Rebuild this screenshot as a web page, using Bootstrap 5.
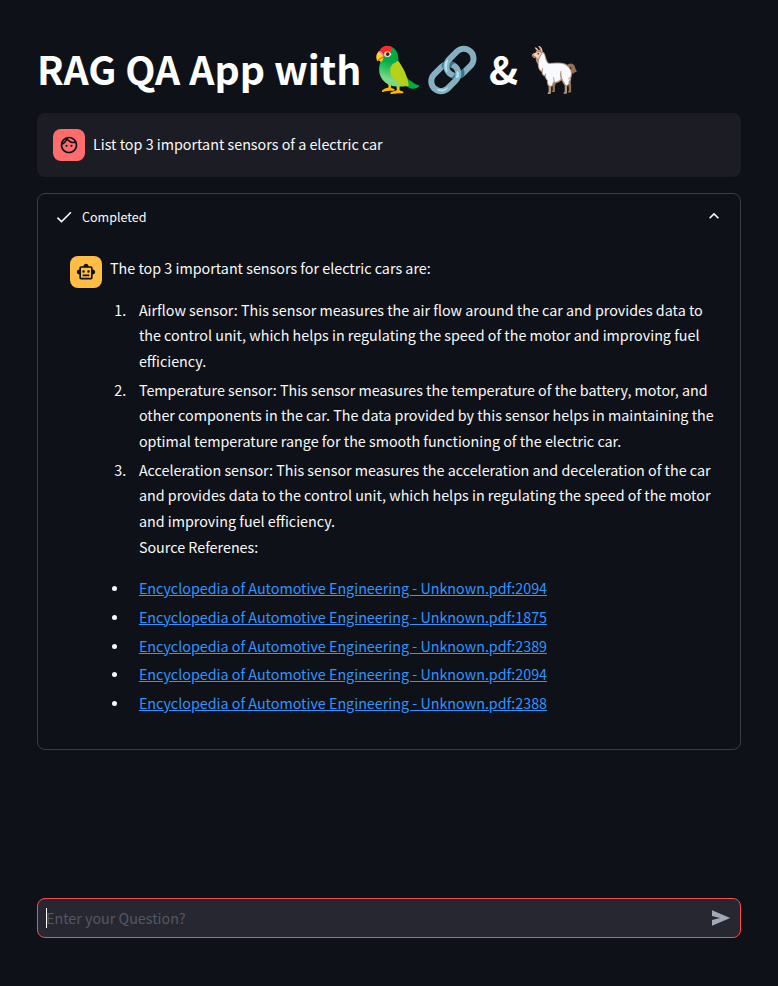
<!DOCTYPE html>
<html lang="en" data-bs-theme="dark">
<head>
<meta charset="utf-8">
<meta name="viewport" content="width=device-width, initial-scale=1">
<title>RAG QA App</title>
<link href="https://cdn.jsdelivr.net/npm/bootstrap@5.3.0/dist/css/bootstrap.min.css" rel="stylesheet">
<style>
  body { background: #0e1117; color: #fafafa; font-family: "Noto Sans CJK SC", "Noto Color Emoji", sans-serif; font-size: 14.327px; line-height: 25.6px; }
  .page { height: 986px; padding: 40px 37px 48px; }
  .app-title { font-size: 39.3px; line-height: 53px; height: 53px; font-weight: 700; margin: 1px 0 19px; white-space: nowrap; }
  .emoji { font-size: 44px; line-height: 1; }
  .avatar { width: 32px; height: 32px; border-radius: 8px; flex: none; color: #0e1117; }
  .avatar-user { background: #ff6c6c; }
  .avatar-bot { background: #ffbd45; }
  .question { background: #1b1c24; border-radius: 8px; height: 64px; }
  .question-text { padding-bottom: 2px; }
  .status-box { border: 1px solid #3b3d43; border-radius: 8px; height: 557px; }
  .status-head { font-size: 12.54px; height: 46px; padding: 0 16px; }
  .chevron { margin-bottom: 2px; }
  .answer { padding: 15.3px 0 0 32px; white-space: nowrap; }
  .answer .avatar { margin-top: .7px; }
  .answer ol, .answer ul { padding: 0; margin: 0 0 15.8px 19.4px; }
  .answer li { padding-left: 9.5px; }
  .answer ul { margin-left: 19px; }
  .answer ul li { padding-left: 9.9px; }
  .answer li + li { margin-top: 3.2px; }
  .answer ul li::marker { font-size: 13px; }
  .answer a { color: #3194ff; text-decoration: underline; }
  .ask { height: 40px; background: #262730; border: 1px solid #ff4b4b; border-radius: 8px; padding: 0 7px 0 8px; color: #555761; }
  .caret { width: 1px; height: 20px; background: #fff; margin-right: -1px; }
</style>
<script src="https://cdn.jsdelivr.net/npm/bootstrap@5.3.0/dist/js/bootstrap.bundle.min.js"></script>
</head>
<body>
<main class="page d-flex flex-column">
  <h1 class="app-title">RAG QA App with <span class="emoji">🦜🔗</span> &amp; <span class="emoji">🦙</span></h1>

  <section class="question d-flex align-items-center gap-2 px-3 mb-3">
    <span class="avatar avatar-user d-flex align-items-center justify-content-center">
      <svg width="20" height="20" viewBox="0 0 24 24" fill="currentColor"><path d="M10.25 13a1.25 1.25 0 1 1-2.5 0 1.25 1.25 0 0 1 2.5 0zM15 11.75a1.25 1.25 0 1 0 0 2.5 1.25 1.25 0 0 0 0-2.5zM22 12c0 5.52-4.48 10-10 10S2 17.520 2 12 6.480 2 12 2s10 4.480 10 10zM10.660 4.120C12.060 6.440 14.600 8 17.500 8c.46 0 .91-.05 1.340-.12C17.440 5.560 14.900 4 12 4c-.46 0-.91.050-1.340.12zM4.420 9.470a8.046 8.046 0 0 0 3.660-4.440 8.046 8.046 0 0 0-3.660 4.440zM20 12c0-.78-.12-1.530-.33-2.240-.7.150-1.420.240-2.170.240a10 10 0 0 1-7.760-3.690A10.016 10.016 0 0 1 4 11.860c.010.040 0 .090 0 .140 0 4.410 3.590 8 8 8s8-3.590 8-8z"/></svg>
    </span>
    <span class="question-text">List top 3 important sensors of a electric car</span>
  </section>

  <section class="status-box">
    <div class="status-head d-flex align-items-center">
      <svg width="20" height="20" viewBox="0 0 24 24" fill="currentColor"><path d="M9 16.170 4.830 12l-1.420 1.410L9 19 21 7l-1.410-1.410z"/></svg>
      <span class="ms-2 me-auto">Completed</span>
      <svg class="chevron" width="20" height="20" viewBox="0 0 24 24" fill="currentColor"><path d="m12 8-6 6 1.410 1.410L12 10.830l4.590 4.580L18 14z"/></svg>
    </div>
    <div class="answer d-flex gap-2">
      <span class="avatar avatar-bot d-flex align-items-center justify-content-center">
        <svg width="20" height="20" viewBox="0 0 24 24" fill="currentColor"><path d="M20 9V7c0-1.100-.9-2-2-2h-3c0-1.660-1.340-3-3-3S9 3.340 9 5H6c-1.100 0-2 .9-2 2v2c-1.660 0-3 1.340-3 3s1.340 3 3 3v4c0 1.100.9 2 2 2h12c1.100 0 2-.9 2-2v-4c1.660 0 3-1.340 3-3s-1.340-3-3-3zm-2 10H6V7h12v12zm-9-6a1.500 1.500 0 1 1 0-3 1.500 1.500 0 0 1 0 3zm7.500-1.500a1.500 1.500 0 1 1-3 0 1.500 1.500 0 0 1 3 0zM8 15h8v2H8z"/></svg>
      </span>
      <div>
        <p class="mb-3">The top 3 important sensors for electric cars are:</p>
        <ol>
          <li>Airflow sensor: This sensor measures the air flow around the car and provides data to<br>the control unit, which helps in regulating the speed of the motor and improving fuel<br>efficiency.</li>
          <li>Temperature sensor: This sensor measures the temperature of the battery, motor, and<br>other components in the car. The data provided by this sensor helps in maintaining the<br>optimal temperature range for the smooth functioning of the electric car.</li>
          <li>Acceleration sensor: This sensor measures the acceleration and deceleration of the car<br>and provides data to the control unit, which helps in regulating the speed of the motor<br>and improving fuel efficiency.<br>Source Referenes:</li>
        </ol>
        <ul>
          <li><a href="#">Encyclopedia of Automotive Engineering - Unknown.pdf:2094</a></li>
          <li><a href="#">Encyclopedia of Automotive Engineering - Unknown.pdf:1875</a></li>
          <li><a href="#">Encyclopedia of Automotive Engineering - Unknown.pdf:2389</a></li>
          <li><a href="#">Encyclopedia of Automotive Engineering - Unknown.pdf:2094</a></li>
          <li><a href="#">Encyclopedia of Automotive Engineering - Unknown.pdf:2388</a></li>
        </ul>
      </div>
    </div>
  </section>

  <div class="ask d-flex align-items-center mt-auto">
    <span class="caret"></span>
    <span class="me-auto">Enter your Question?</span>
    <svg width="24" height="24" viewBox="0 0 24 24" fill="#a3a8b8"><path d="M3 4.200 21.200 12 3 19.800V14.100L11 12 3 9.900z"/></svg>
  </div>
</main>
</body>
</html>
